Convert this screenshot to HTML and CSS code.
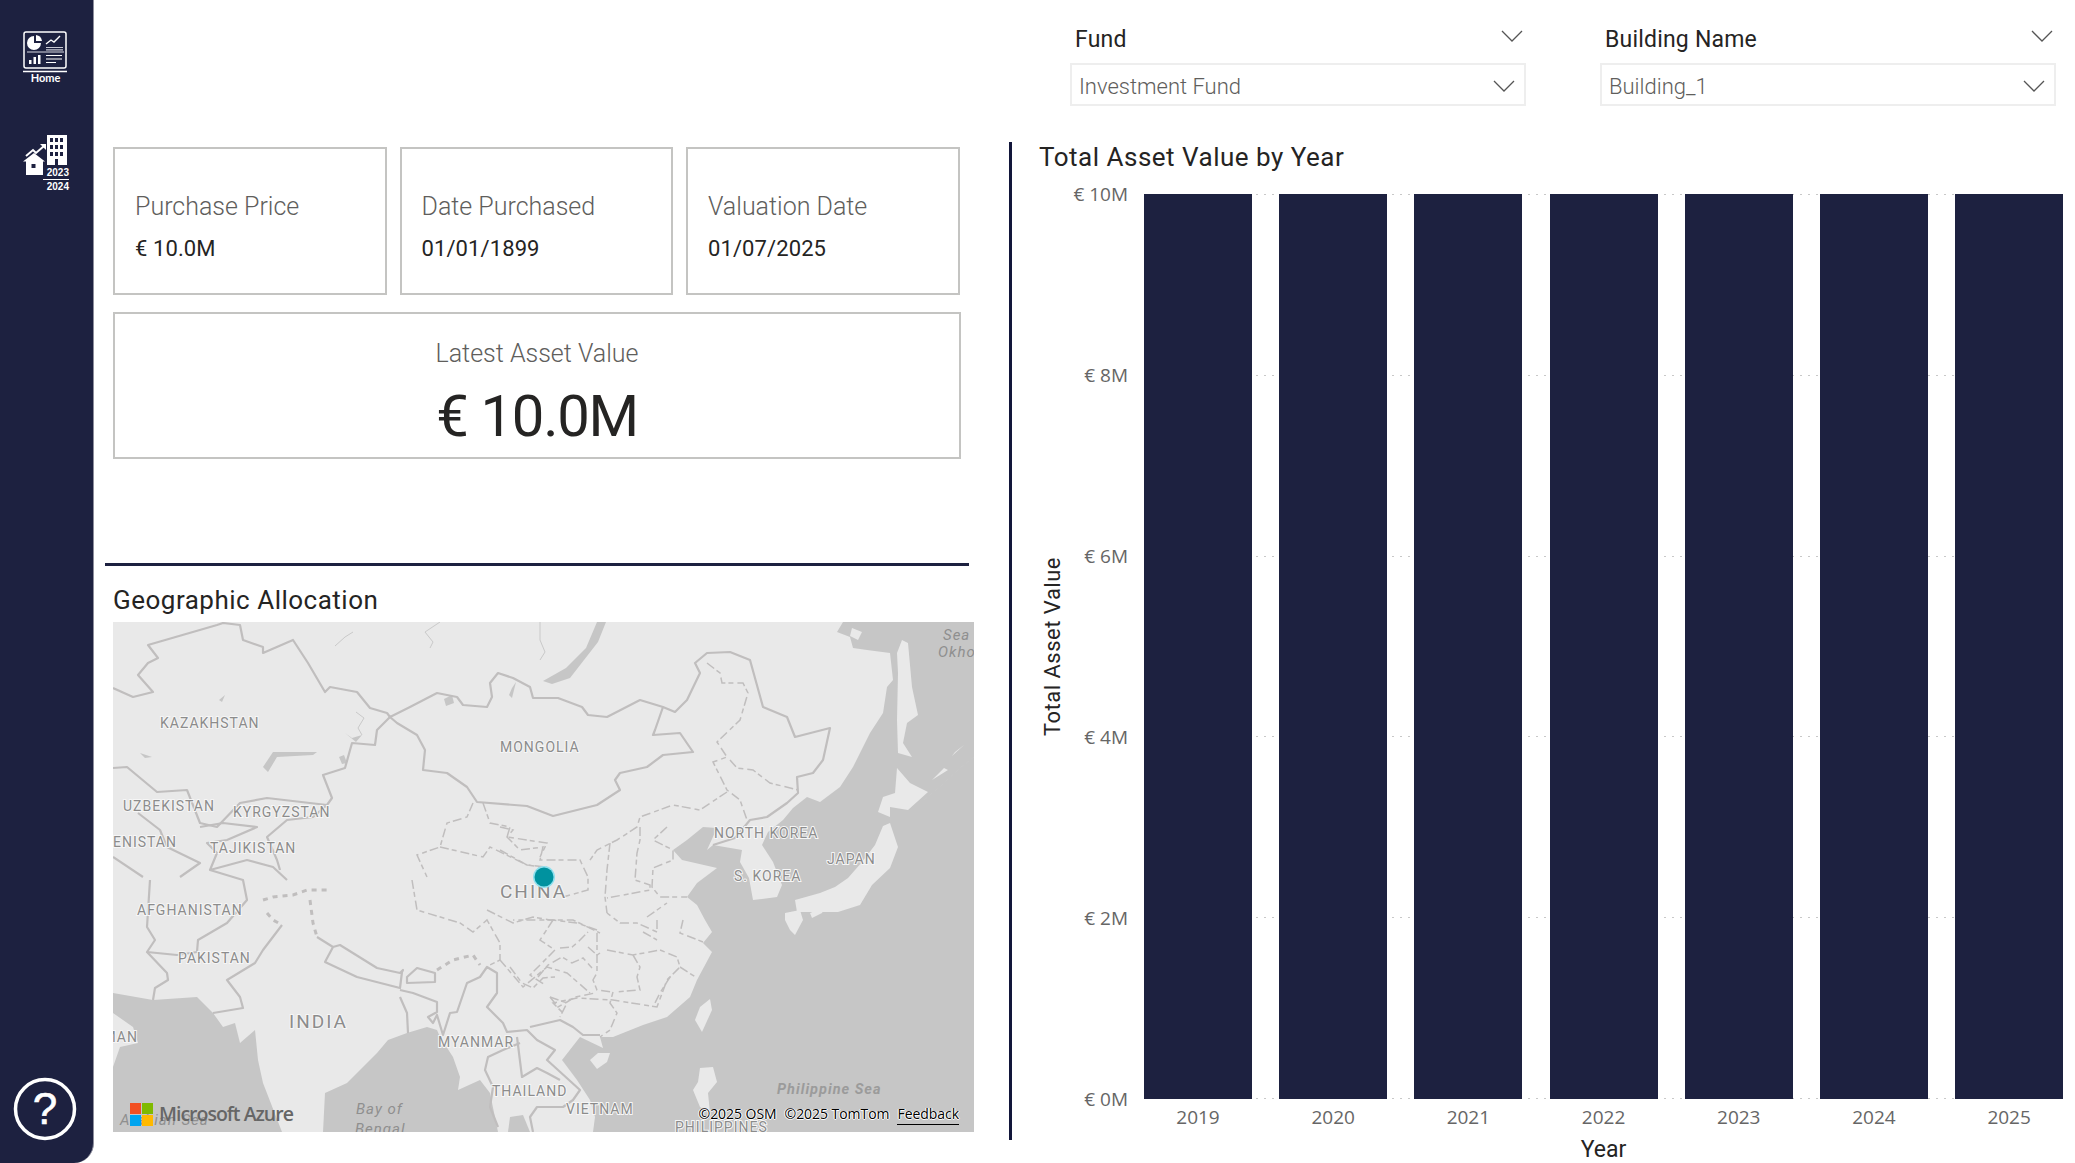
FILE: index.html
```html
<!DOCTYPE html>
<html>

<head>
	<title>Asset Overview</title>
	<link rel="stylesheet" href="styles.css">
</head>

<body>
	<div class="page">
		<nav class="sidebar">
			<div class="nav-home">
				<svg class="icon-home" viewBox="0 0 45 42" width="45" height="42">
					<rect x="1" y="1" width="42" height="36" rx="2" fill="none" stroke="#fff" stroke-width="1.5" />
					<path d="M11 5 a7 7 0 1 0 7 7 h-7z" fill="#fff" />
					<path d="M13 4 a7 7 0 0 1 6 6 h-6z" fill="#fff" />
					<path d="M23 13 l5 -4 l3 2 l6 -6" fill="none" stroke="#fff" stroke-width="1.4" />
					<path d="M23 16.500h17 M23 18.800h17" stroke="#c9cad4" stroke-width="1.200" />
					<path d="M4 21h37" stroke="#d9dae2" stroke-width="1.200" />
					<path d="M6 33v-4h2.500v4z M10.500 33v-7h2.500v7z M15 33v-9h2.500v9z" fill="#fff" />
					<path d="M23 24.500h16 M23 28h16 M23 31.500h10" stroke="#fff" stroke-width="1.200" />
					<path d="M0 40.500h44" stroke="#fff" stroke-width="1.300" />
				</svg>
				<span class="nav-home-label">Home</span>
			</div>
			<div class="nav-years">
				<svg viewBox="0 0 46 52" width="46" height="52">
					<path d="M24 0h20v30h-20z" fill="#fff" />
					<g fill="#1d2140">
						<rect x="27" y="3" width="3" height="4" />
						<rect x="32" y="3" width="3" height="4" />
						<rect x="37" y="3" width="3" height="4" />
						<rect x="27" y="10" width="3" height="4" />
						<rect x="32" y="10" width="3" height="4" />
						<rect x="37" y="10" width="3" height="4" />
						<rect x="27" y="17" width="3" height="4" />
						<rect x="32" y="17" width="3" height="4" />
						<rect x="37" y="17" width="3" height="4" />
						<rect x="32" y="24" width="3" height="6" />
					</g>
					<path d="M3 21 l7 -6 l3 3 l8 -7" fill="none" stroke="#fff" stroke-width="2" />
					<path d="M17 9 h6 v6z" fill="#fff" />
					<path d="M11 18 l11 8.500 h-2 v13.500 h-17 v-13.500 h-3z" fill="#fff" />
					<rect x="8.500" y="29" width="4" height="4" fill="#1d2140" />
				</svg>
				<span class="nav-year-top">2023</span>
				<span class="nav-year-bottom">2024</span>
			</div>
			<svg class="help" viewBox="0 0 64 64" width="64" height="64">
				<circle cx="32" cy="32" r="29.500" fill="none" stroke="#fff" stroke-width="3.500" />
				<text class="help-mark" x="32" y="47" text-anchor="middle">?</text>
			</svg>
		</nav>

		<div class="left">
			<div class="kpi-row">
				<div class="kpi-card">
					<div class="kpi-label">Purchase Price</div>
					<div class="kpi-value">€ 10.0M</div>
				</div>
				<div class="kpi-card">
					<div class="kpi-label">Date Purchased</div>
					<div class="kpi-value">01/01/1899</div>
				</div>
				<div class="kpi-card">
					<div class="kpi-label">Valuation Date</div>
					<div class="kpi-value">01/07/2025</div>
				</div>
			</div>
			<div class="latest-card">
				<div class="latest-label">Latest Asset Value</div>
				<div class="latest-value">€ 10.0M</div>
			</div>
			<div class="rule"></div>
			<h2 class="visual-title geo-title">Geographic Allocation</h2>
			<div class="map">
				<svg class="map-svg" viewBox="113 622 861 510" width="861" height="510">
					<rect x="113" y="622" width="861" height="510" fill="#e9e9e9" />

					<!-- seas -->
					<g fill="#c6c6c6">
						<path d="M843,622 837,632 850,637 853,648 867,650 890,653 893,680 887,687 883,713 870,733 860,753 853,767 840,787 820,802 807,797 793,808 783,820 768,832 762,845 773,862 782,885 777,897 753,900 749,878 740,862 742,850 713,845 707,850 717,828 703,827 687,840 673,850 682,860 717,868 697,883 687,897 697,905 705,920 712,932 703,943 712,952 697,980 690,997 667,1017 643,1025 613,1037 600,1037 603,1048 580,1037 562,1060 577,1080 590,1100 595,1117 593,1132 974,1132 974,622z" />
						<path d="M323,1132 325,1093 347,1083 377,1053 388,1040 407,1033 427,1027 437,1030 440,1037 453,1057 460,1077 458,1090 480,1080 490,1093 498,1132z" />
						<path d="M113,993 153,1000 197,997 213,1013 223,1027 235,1023 240,1043 255,1030 258,1060 263,1083 282,1132 113,1132z" />
						<path d="M508,1132 510,1117 523,1115 530,1132z" />
						<path d="M597,622 586,648 566,668 543,681 552,684 570,678 584,660 598,642 606,622z" />
						<path d="M263,767 273,752 317,752 313,755 277,757 268,772z" />
						<path d="M140,753 152,757 145,758z M339,757 344,755 347,763 342,764z M219,700 225,695 222,702z M345,733 352,738 362,735 356,742z" />
						<path d="M444,699 452,695 454,703 446,706z M512,688 516,682 512,698 509,695z" />
					</g>

					<!-- islands -->
					<g fill="#e9e9e9">
						<path d="M113,1013 133,1027 138,1043 120,1047 113,1067z" />
						<path d="M902,640 908,643 912,687 918,715 907,723 903,743 912,757 898,753 897,720 898,673 897,653z" />
						<path d="M897,768 910,783 928,792 908,810 890,807 890,817 878,812 883,797 895,793z" />
						<path d="M890,823 898,847 890,868 872,885 860,905 838,912 815,912 797,912 795,900 820,893 835,887 848,878 862,862 875,845 883,826z" />
						<path d="M785,913 800,910 803,920 795,935 790,930 785,920z M810,913 825,907 822,913 812,918z M837,907 850,900 840,910z" />
						<path d="M710,999 712,1010 702,1032 695,1020 700,1007z" />
						<path d="M590,1060 598,1053 610,1053 607,1062 597,1069z" />
						<path d="M700,1068 713,1067 717,1082 708,1093 710,1113 700,1107 693,1090 698,1082z" />
						<path d="M852,628 862,632 858,640 850,636z M944,768 932,780 948,770z M955,752 964,745 952,756z" />
					</g>

					<!-- country borders -->
					<g fill="none" stroke="#c0bebe" stroke-width="2.200" stroke-linejoin="round">
						<path d="M113,688 133,697 153,692 138,675 148,663 158,658 148,645 217,625 223,623 240,625 243,640 263,647 263,653 293,640 308,663 325,692 330,687 357,692 370,708 387,713 390,717 410,707 437,693 457,697 463,705 487,707 492,697 490,683 498,673 513,678 530,687 533,698 558,698 582,707 588,715 607,717 640,700 663,707 675,712 687,700 700,673 695,663 707,653 730,652 750,660 763,707 787,717 795,737 830,728 823,760 813,773 797,777 798,793 787,803 767,817 750,820 735,838 713,845" />
						<path d="M663,707 655,730 653,735 680,733 693,752 663,755 647,767 620,773 615,780 620,790 597,805 553,816 527,806 477,802 467,787 447,773 423,770 425,750 417,735 397,723 390,717" />
						<path d="M390,717 377,730 375,745 352,743 345,768 323,775 332,798 327,805 267,798 240,803 217,827 200,823 187,790 157,792 127,767 113,768" />
						<path d="M327,805 313,817 287,820 267,837 277,860 280,870" />
						<path d="M138,813 160,830 167,847 200,863 180,877 M200,827 223,823 257,827 227,840 207,843 217,853 210,870 247,860 273,867 287,880 M113,857 143,877" />
						<path d="M150,880 147,927 155,940 147,952 177,955 197,952 198,940 227,923 247,900 243,880 210,870" />
						<path d="M147,952 167,973 168,980 155,988 153,1000" />
						<path d="M282,925 263,950 255,963 227,980 240,997 243,1008 213,1013" />
						<path d="M317,937 333,947 340,945 377,968 400,973 403,970 402,972 400,988 357,977 325,962 333,947" />
						<path d="M407,977 417,968 435,973 435,982 407,983z" />
						<path d="M400,990 413,993 437,1002 437,1012 428,1017 433,1023 437,1015 443,1035 450,1013 457,1012 467,983 480,977 487,967 497,973 497,993 487,1007 503,1023 507,1032 527,1030 537,1040 555,1050 547,1060 580,1090 573,1100 563,1107 537,1107 530,1117 533,1132" />
						<path d="M400,997 407,1013 408,1033" />
						<path d="M530,1027 560,1020 573,1027 583,1035 600,1035" />
						<path d="M520,1043 503,1050 488,1057 485,1070 493,1087 490,1107 498,1127" />
						<path d="M517,1037 522,1077 537,1068 547,1073 560,1080" />
					</g>

					<!-- disputed areas, heavier dashes -->
					<g fill="none" stroke="#c0bebe" stroke-width="3" stroke-dasharray="5 5">
						<path d="M263,900 273,897 293,895 307,890 327,890" />
						<path d="M267,913 273,920 282,925" />
						<path d="M310,900 313,923 317,937" />
						<path d="M437,970 453,960 473,955 480,965" />
					</g>

					<!-- province borders -->
					<g fill="none" stroke="#c0bebe" stroke-width="1.500" stroke-dasharray="9 3 5 4">
						<path d="M707,663 720,673 722,683 743,683 748,693 740,720 717,742 727,757 713,762 727,790 740,800 747,820" />
						<path d="M730,760 737,768 753,770 770,783 798,790" />
						<path d="M727,792 700,810 673,805 640,817 637,827 617,840 597,850 588,863" />
						<path d="M640,827 640,840 637,853 635,880 650,885 650,890 607,898" />
						<path d="M667,827 653,840 673,850 673,860 653,868 652,887 660,897 687,897" />
						<path d="M610,843 607,870 605,897 607,913" />
						<path d="M500,827 513,830 507,837 520,850 543,847 540,860 580,860 588,877 588,890 563,897" />
						<path d="M500,850 527,865 540,867" />
						<path d="M473,803 467,817 447,823 440,847 417,855 427,877" />
						<path d="M440,847 483,857 490,847 527,865 547,867" />
						<path d="M483,803 490,823 510,827 507,837 547,843 540,857" />
						<path d="M412,880 417,910 460,923 473,932 487,920 500,943 500,960 490,965" />
						<path d="M487,910 513,923 533,917 550,920 573,920 600,933" />
						<path d="M500,960 523,987 547,967 567,973 590,993" />
						<path d="M550,997 567,1003 560,1017" />
						<path d="M597,933 597,973 593,980 597,990 613,992 610,1003 617,1013 610,1030 600,1037" />
						<path d="M607,950 633,955 660,950 677,957 680,967 667,980 657,1007 613,1000 577,998 553,1003 565,1015" />
						<path d="M633,955 640,967 637,977 640,990 615,992" />
						<path d="M657,920 657,932 637,923 620,923 607,913" />
						<path d="M683,920 680,933 703,942 M680,967 697,978" />
						<path d="M597,930 577,923 553,920 513,920" />
						<path d="M553,920 540,940 555,950 530,975 545,985" />
						<path d="M560,948 572,947 577,943 588,932" />
						<path d="M588,947 597,955 600,953" />
						<path d="M510,967 522,983 533,988 543,978 555,977" />
						<path d="M538,977 548,965 562,957 572,963 583,958 592,968" />
						<path d="M550,997 558,1007 567,1002 575,997 595,993" />
						<path d="M647,917 657,910 667,903 M643,932 657,940 M670,977 660,993 655,1003" />
					</g>

					<!-- rivers -->
					<g fill="none" stroke="#c9c9c9" stroke-width="1">
						<path d="M335,646 345,637 353,632" />
						<path d="M440,622 425,632 433,642 430,648" />
						<path d="M540,622 540,640 545,652 540,660" />
						<path d="M356,712 364,718 358,728 362,735" />
						<path d="M924,800 942,785 960,768 974,757" stroke-dasharray="4 3" />
					</g>

					<!-- labels -->
					<text class="place" x="160" y="728">KAZAKHSTAN</text>
					<text class="place" x="500" y="752">MONGOLIA</text>
					<text class="place" x="123" y="811">UZBEKISTAN</text>
					<text class="place" x="233" y="817">KYRGYZSTAN</text>
					<text class="place" x="210" y="853">TAJIKISTAN</text>
					<text class="place" x="177" y="847" text-anchor="end">TURKMENISTAN</text>
					<text class="place" x="137" y="915">AFGHANISTAN</text>
					<text class="place" x="178" y="963">PAKISTAN</text>
					<text class="place" x="138" y="1042" text-anchor="end">OMAN</text>
					<text class="place place-big" x="289" y="1028">INDIA</text>
					<text class="place place-big" x="500" y="898">CHINA</text>
					<text class="place" x="438" y="1047">MYANMAR</text>
					<text class="place" x="492" y="1096">THAILAND</text>
					<text class="place" x="566" y="1114">VIETNAM</text>
					<text class="place" x="675" y="1132">PHILIPPINES</text>
					<text class="place" x="714" y="838">NORTH KOREA</text>
					<text class="place" x="734" y="881">S. KOREA</text>
					<text class="place" x="827" y="864">JAPAN</text>
					<text class="sea" x="943" y="640">Sea</text>
					<text class="sea" x="938" y="657">Okhotsk</text>
					<text class="sea" x="120" y="1125">Arabian Sea</text>
					<text class="sea" x="356" y="1114">Bay of</text>
					<text class="sea" x="355" y="1134">Bengal</text>
					<text class="sea sea-bold" x="777" y="1094">Philippine Sea</text>

					<circle cx="544" cy="877" r="11" fill="#8fe0ee" />
					<circle cx="544" cy="877" r="9.500" fill="#00929f" />
				</svg>
				<div class="map-logo">
					<div class="ms-squares">
						<span class="ms-red"></span>
						<span class="ms-green"></span>
						<span class="ms-blue"></span>
						<span class="ms-yellow"></span>
					</div>
					<span class="map-logo-text">Microsoft Azure</span>
				</div>
				<div class="map-credits">
					<span>©2025 OSM</span>
					<span>©2025 TomTom</span>
					<span class="feedback">Feedback</span>
				</div>
			</div>
		</div>

		<div class="right">
			<div class="slicers">
				<div class="slicer">
					<div class="slicer-head">
						<span>Fund</span>
						<svg class="chevron" viewBox="0 0 22 12" width="22" height="12"><path d="M1 1l10 10l10 -10" /></svg>
					</div>
					<div class="slicer-box">
						<span>Investment Fund</span>
						<svg class="chevron" viewBox="0 0 22 12" width="22" height="12"><path d="M1 1l10 10l10 -10" /></svg>
					</div>
				</div>
				<div class="slicer">
					<div class="slicer-head">
						<span>Building Name</span>
						<svg class="chevron" viewBox="0 0 22 12" width="22" height="12"><path d="M1 1l10 10l10 -10" /></svg>
					</div>
					<div class="slicer-box">
						<span>Building_1</span>
						<svg class="chevron" viewBox="0 0 22 12" width="22" height="12"><path d="M1 1l10 10l10 -10" /></svg>
					</div>
				</div>
			</div>

			<section class="chart">
				<h2 class="visual-title">Total Asset Value by Year</h2>
				<div class="chart-grid">
					<div class="y-title"><span>Total Asset Value</span></div>
					<div class="y-labels">
						<span>€ 10M</span>
						<span>€ 8M</span>
						<span>€ 6M</span>
						<span>€ 4M</span>
						<span>€ 2M</span>
						<span>€ 0M</span>
					</div>
					<div class="plot">
						<div class="gridlines">
							<i></i><i></i><i></i><i></i><i></i><i></i>
						</div>
						<div class="bar"></div>
						<div class="bar"></div>
						<div class="bar"></div>
						<div class="bar"></div>
						<div class="bar"></div>
						<div class="bar"></div>
						<div class="bar"></div>
					</div>
					<div class="x-labels">
						<span>2019</span>
						<span>2020</span>
						<span>2021</span>
						<span>2022</span>
						<span>2023</span>
						<span>2024</span>
						<span>2025</span>
					</div>
					<div class="x-title">Year</div>
				</div>
			</section>
		</div>
	</div>
</body>

</html>
```

FILE: styles.css
```css
* {
	box-sizing: border-box;
}

body {
	margin: 0;
	background-color: #fff;
	font-family: Roboto, "Liberation Sans", sans-serif;
	color: #252423;
	overflow: hidden;
}

.page {
	display: flex;
	width: 2075px;
	height: 1163px;
}

/* sidebar */
.sidebar {
	display: flex;
	flex-direction: column;
	align-items: flex-start;
	flex: 0 0 94px;
	height: 100%;
	padding: 31px 0 22px 23px;
	background-color: #1d2140;
	border-right: 1px solid #8d8e9c;
	border-bottom-right-radius: 20px;
	color: #fff;
}

.nav-home {
	display: flex;
	flex-direction: column;
	align-items: center;
	width: 45px;
}

.icon-home {
	display: block;
}

.nav-home-label {
	margin-top: -1px;
	font-family: Lato, sans-serif;
	font-size: 11px;
	font-weight: 700;
	line-height: 12px;
}

.nav-years {
	display: flex;
	flex-direction: column;
	align-items: flex-end;
	width: 46px;
	margin-top: 51px;
	font-family: "Liberation Sans", sans-serif;
	font-size: 10px;
	font-weight: 700;
	line-height: 11px;
}

.nav-years svg {
	display: block;
	margin-bottom: -20px;
}

.nav-year-top {
	border-bottom: 1px solid #fff;
	padding: 0 0 1px 1px;
	width: 26px;
	text-align: right;
}

.nav-year-bottom {
	margin-top: 1px;
}

.help {
	margin-top: auto;
	margin-left: -10px;
}

.help-mark {
	font-family: "Liberation Sans", sans-serif;
	font-size: 44px;
	font-weight: 400;
	fill: #fff;
	stroke: #fff;
	stroke-width: 0.6px;
}

/* left column */
.left {
	flex: 0 0 915px;
	padding: 147px 0 0 19px;
}

.kpi-row {
	display: flex;
	gap: 13px;
}

.kpi-card {
	display: flex;
	flex-direction: column;
	justify-content: center;
	width: 273.500px;
	height: 148px;
	padding: 12px 0 0 20px;
	border: 2px solid #c4c4c2;
}

.kpi-label {
	font-size: 25px;
	font-weight: 300;
	line-height: 34px;
	color: #605e5c;
}

.kpi-value {
	margin-top: 9px;
	font-size: 22px;
	letter-spacing: 0.1px;
	line-height: 32px;
}

.latest-card {
	display: flex;
	flex-direction: column;
	align-items: center;
	width: 848px;
	height: 147px;
	margin-top: 17px;
	padding-top: 23px;
	border: 2px solid #c4c4c2;
}

.latest-label {
	font-size: 25px;
	font-weight: 300;
	line-height: 34px;
	color: #605e5c;
}

.latest-value {
	margin-top: 9px;
	font-size: 58px;
	letter-spacing: -1.3px;
	line-height: 72px;
}

.rule {
	width: 864px;
	height: 3px;
	margin: 104px 0 0 -8px;
	background-color: #1d2140;
}

.visual-title {
	margin: 0;
	font-size: 26px;
	font-weight: 400;
	letter-spacing: 0.5px;
	line-height: 30px;
	color: #252423;
}

.geo-title {
	margin-top: 19px;
}

/* map */
.map {
	position: relative;
	width: 861px;
	height: 510px;
	margin-top: 7px;
	overflow: hidden;
}

.map-svg {
	display: block;
}

.place {
	font-family: Roboto, sans-serif;
	font-size: 14px;
	letter-spacing: 1px;
	fill: #8c8c8c;
	stroke: #f6f6f6;
	stroke-width: 2px;
	paint-order: stroke;
}

.place-big {
	font-size: 19px;
	letter-spacing: 2px;
}

.sea {
	font-family: Roboto, sans-serif;
	font-size: 15px;
	font-style: italic;
	letter-spacing: 1px;
	fill: #8f8f8f;
}

.sea-bold {
	font-size: 14.500px;
	font-weight: 700;
	fill: #9b9b9b;
}

.map-logo {
	position: absolute;
	left: 17px;
	bottom: 5px;
	display: flex;
	align-items: center;
	gap: 6px;
}

.ms-squares {
	display: grid;
	grid-template-columns: 11px 11px;
	gap: 1px;
	margin-bottom: -2px;
}

.ms-squares span {
	height: 11px;
}

.ms-red {
	background-color: #f25022;
}

.ms-green {
	background-color: #7fba00;
}

.ms-blue {
	background-color: #00a4ef;
}

.ms-yellow {
	background-color: #ffb900;
}

.map-logo-text {
	font-family: "Open Sans", sans-serif;
	font-size: 19.500px;
	font-weight: 600;
	letter-spacing: -1px;
	color: #666;
}

.map-credits {
	position: absolute;
	right: 15px;
	bottom: 7px;
	display: flex;
	gap: 8px;
	font-family: "Open Sans", sans-serif;
	font-size: 14px;
	letter-spacing: -0.05px;
	line-height: 20px;
	color: #000;
	text-shadow: 0 1px 0 #fff, 1px 0 0 #fff, -1px 0 0 #fff;
}

.feedback {
	border-bottom: 1px solid #000;
}

/* right column */
.right {
	flex: 1;
	min-width: 0;
}

.slicers {
	display: flex;
	gap: 74px;
	height: 142px;
	padding: 24px 0 0 61px;
}

.slicer {
	width: 456px;
}

.slicer-head {
	display: flex;
	justify-content: space-between;
	align-items: center;
	height: 30px;
	padding: 0 3px 0 5px;
	font-size: 23px;
	letter-spacing: 0.2px;
	color: #252423;
}

.slicer-head .chevron {
	margin-top: -6px;
}

.slicer-box {
	display: flex;
	justify-content: space-between;
	align-items: center;
	height: 43px;
	margin-top: 9px;
	padding: 3px 9px 0 7px;
	border: 2px solid #eee;
	font-size: 22px;
	font-weight: 300;
	color: #605e5c;
}

.chevron path {
	fill: none;
	stroke: #555;
	stroke-width: 1.300;
}

.chart {
	height: 998px;
	padding-left: 27px;
	border-left: 3px solid #12163a;
}

.chart-grid {
	display: grid;
	grid-template-columns: 26px 63px 935px;
	grid-template-rows: 905px 36px 24px;
	margin-top: 22px;
}

.y-title {
	display: flex;
	justify-content: center;
	align-items: center;
	font-size: 22px;
	letter-spacing: 0.5px;
	white-space: nowrap;
}

.y-title span {
	writing-mode: vertical-rl;
	transform: rotate(180deg);
}

.y-labels {
	display: flex;
	flex-direction: column;
	justify-content: space-between;
	align-items: flex-end;
	height: 925px;
	margin-top: -10px;
	font-family: "Open Sans", sans-serif;
	font-size: 19px;
	line-height: 20px;
	color: #666;
}

.plot {
	position: relative;
	display: flex;
	gap: 27.200px;
	margin-left: 16px;
}

.gridlines {
	position: absolute;
	inset: 0;
	display: flex;
	flex-direction: column;
	justify-content: space-between;
}

.gridlines i {
	display: block;
	height: 1px;
	background-image: repeating-linear-gradient(to right, #c8c8c8 0 2px, transparent 2px 8px);
}

.bar {
	position: relative;
	flex: 0 0 108px;
	background-color: #1d2140;
}

.x-labels {
	grid-column: 3;
	display: flex;
	gap: 27.200px;
	margin-left: 16px;
	padding-top: 6px;
	font-family: "Open Sans", sans-serif;
	font-size: 19px;
	line-height: 24px;
	color: #666;
}

.x-labels span {
	flex: 0 0 108px;
	text-align: center;
}

.x-title {
	grid-column: 3;
	margin-left: 16px;
	padding-top: 3px;
	font-size: 23px;
	line-height: 24px;
	text-align: center;
}
```
